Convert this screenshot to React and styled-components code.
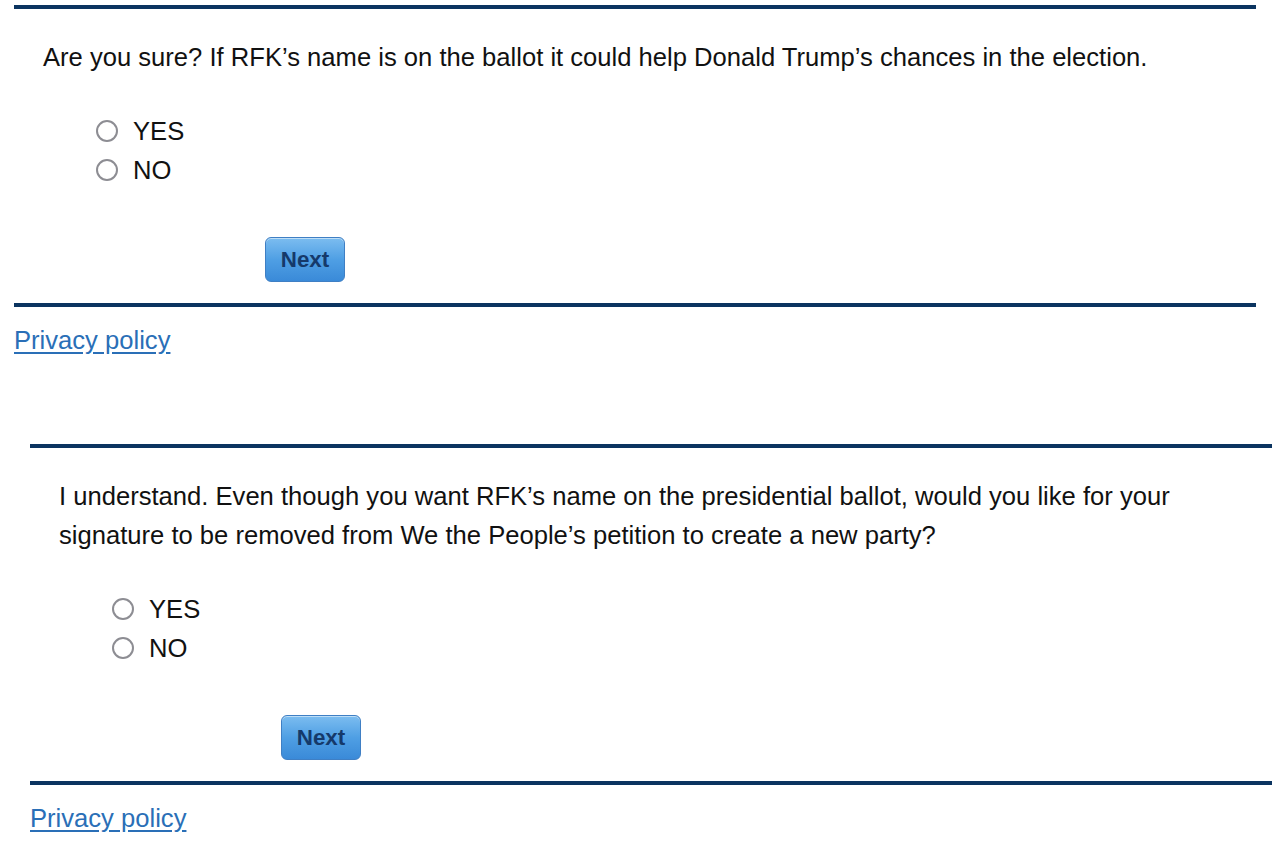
import React from "react";
import styled, { createGlobalStyle } from "styled-components";

const GlobalStyle = createGlobalStyle`
  html, body {
    margin: 0;
    padding: 0;
    background: #fff;
  }
  body {
    font-family: "Liberation Sans", Arial, sans-serif;
    color: #111;
  }
`;

const Page = styled.div`
  padding-top: 5px;
  display: flex;
  flex-direction: column;
  gap: 89px;
`;

const Survey = styled.section`
  margin-left: ${(p) => p.$offset}px;
  width: 1242px;
`;

const Card = styled.div`
  border-top: 4px solid #0b3460;
  border-bottom: 4px solid #0b3460;
  padding: 29px 0 21px 29px;
`;

const Question = styled.p`
  margin: 0;
  font-size: 25.6px;
  line-height: 39px;
`;

const Options = styled.div`
  display: flex;
  flex-direction: column;
  gap: 11px;
  margin: 40px 0 0 53px;
`;

const Option = styled.label`
  display: flex;
  align-items: center;
  gap: 15px;
  font-size: 25.6px;
  line-height: 28px;
`;

const Radio = styled.input.attrs({ type: "radio" })`
  appearance: none;
  margin: 0;
  width: 22px;
  height: 22px;
  border-radius: 50%;
  border: 2px solid #8d8d93;
  background: #fff;
  box-sizing: border-box;
`;

const Actions = styled.div`
  margin: 53px 0 0 222px;
`;

const NextButton = styled.button`
  width: 80px;
  height: 45px;
  border-radius: 6px;
  border: 1px solid #3f7fc4;
  background: linear-gradient(to bottom, #7cbdf0 0%, #4f9fe4 50%, #3a8ad8 100%);
  box-shadow: inset 0 1px 0 rgba(255, 255, 255, 0.5);
  color: #15396a;
  font-family: "Liberation Sans", Arial, sans-serif;
  font-weight: bold;
  font-size: 22.4px;
  padding: 0;
  cursor: pointer;
`;

const PrivacyLink = styled.a`
  display: inline-block;
  margin-top: 18px;
  font-size: 25.6px;
  line-height: 30px;
  color: #2a6fb7;
  text-decoration: underline;
  text-underline-offset: 3px;
`;

const surveys = [
  {
    offset: 14,
    question:
      "Are you sure? If RFK\u2019s name is on the ballot it could help Donald Trump\u2019s chances in the election.",
  },
  {
    offset: 30,
    question:
      "I understand. Even though you want RFK\u2019s name on the presidential ballot, would you like for your signature to be removed from We the People\u2019s petition to create a new party?",
  },
];

export default function App() {
  return (
    <>
      <GlobalStyle />
      <Page>
        {surveys.map((s, i) => (
          <Survey key={i} $offset={s.offset}>
            <Card>
              <Question>{s.question}</Question>
              <Options>
                <Option>
                  <Radio name={`q${i}`} />
                  YES
                </Option>
                <Option>
                  <Radio name={`q${i}`} />
                  NO
                </Option>
              </Options>
              <Actions>
                <NextButton>Next</NextButton>
              </Actions>
            </Card>
            <PrivacyLink href="#">Privacy policy</PrivacyLink>
          </Survey>
        ))}
      </Page>
    </>
  );
}
